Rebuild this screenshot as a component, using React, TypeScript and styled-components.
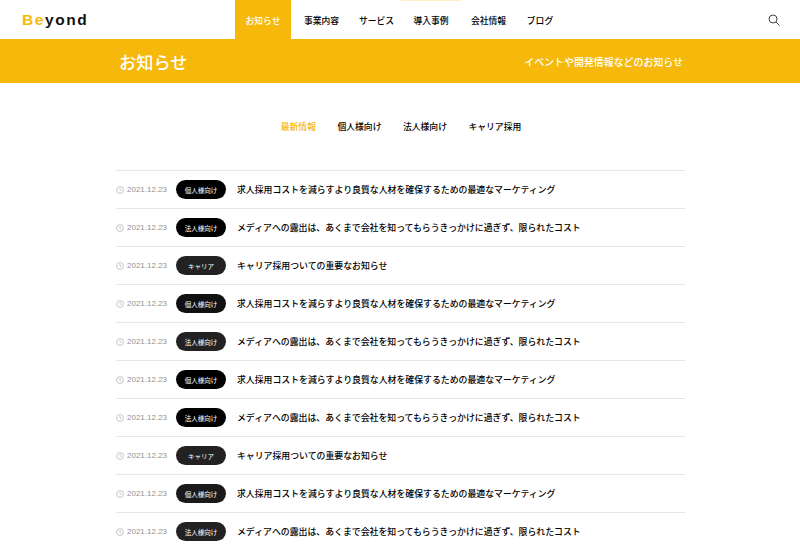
import { createGlobalStyle } from "styled-components";
import styled from "styled-components";

const GlobalStyle = createGlobalStyle`
  html, body {
    margin: 0;
    padding: 0;
    height: 550px;
    overflow: hidden;
    background: #fff;
    font-family: "Noto Sans CJK JP", "Noto Sans", sans-serif;
    color: #000;
  }
`;

const Header = styled.header`
  display: flex;
  align-items: stretch;
  height: 39px;
  padding: 0 20px 0 22px;
`;

const Logo = styled.div`
  width: 213px;
  display: flex;
  align-items: center;
  font-family: "Liberation Sans", sans-serif;
  font-size: 15.5px;
  font-weight: 700;
  letter-spacing: 1.6px;
  color: #111;

  span {
    color: #f5b80b;
  }
`;

const Nav = styled.nav`
  display: flex;
  flex: 1;
`;

const NavItem = styled.a<{ $active?: boolean; $hover?: boolean; $wide: number }>`
  display: flex;
  align-items: center;
  justify-content: center;
  width: ${(props) => props.$wide}px;
  font-size: 8.8px;
  font-weight: 500;
  white-space: nowrap;
  box-sizing: border-box;
  border-top: 1px solid ${(props) => (props.$hover ? "#fdf1c8" : "transparent")};
  background: ${(props) => (props.$active ? "#f5b80b" : "transparent")};
  color: ${(props) => (props.$active ? "#fff" : "#000")};
`;

const SearchButton = styled.div`
  display: flex;
  align-items: center;
  color: #333;
`;

const Hero = styled.div`
  height: 44px;
  background: #f5b80b;
  color: #fff;
  display: flex;
  align-items: center;
  justify-content: space-between;
  padding: 0 117px 0 119px;
`;

const HeroTitle = styled.h1`
  margin: 0;
  font-size: 17.2px;
  font-weight: 500;
`;

const HeroText = styled.p`
  margin: 0;
  font-size: 9.95px;
  font-weight: 500;
`;

const Tabs = styled.div`
  display: flex;
  justify-content: center;
  gap: 21.5px;
  margin-top: 37px;
  padding-left: 2px;
  height: 14px;
  align-items: center;
`;

const Tab = styled.a<{ $active?: boolean }>`
  font-size: 8.8px;
  font-weight: 500;
  line-height: 14px;
  color: ${(props) => (props.$active ? "#f5b80b" : "#000")};
`;

const List = styled.ul`
  list-style: none;
  margin: 36px 115px 0 116px;
  padding: 0;
  border-top: 1px solid #e6e6e6;
`;

const Row = styled.li`
  display: flex;
  align-items: center;
  height: 37px;
  border-bottom: 1px solid #e6e6e6;
`;

const DateCell = styled.div`
  width: 60px;
  display: flex;
  align-items: center;
  gap: 3px;
  font-family: "Liberation Sans", sans-serif;
  font-size: 8px;
  color: #929292;
`;

const Badge = styled.span<{ $color: string }>`
  width: 50px;
  height: 19px;
  border-radius: 10px;
  display: flex;
  align-items: center;
  justify-content: center;
  background: ${(props) => props.$color};
  color: #fff;
  font-size: 6.5px;
  font-weight: 400;
  margin-right: 11px;
`;

const RowTitle = styled.a`
  font-size: 8.88px;
  font-weight: 500;
  color: #000;
  white-space: nowrap;
`;

const Clock = () => (
  <svg width="8" height="8" viewBox="0 0 14 14" fill="none" stroke="#a5a5a5" strokeWidth="1.1">
    <circle cx="7" cy="7" r="6" />
    <path d="M7 3.5V7l2.5 1.5" />
  </svg>
);

const recruit = "求人採用コストを減らすより良質な人材を確保するための最適なマーケティング";
const media = "メディアへの露出は、あくまで会社を知ってもらうきっかけに過ぎず、限られたコスト";
const career = "キャリア採用ついての重要なお知らせ";

const rows = [
  { tag: "個人様向け", color: "#000", title: recruit },
  { tag: "法人様向け", color: "#000", title: media },
  { tag: "キャリア", color: "#222", title: career },
  { tag: "個人様向け", color: "#111", title: recruit },
  { tag: "法人様向け", color: "#222", title: media },
  { tag: "個人様向け", color: "#000", title: recruit },
  { tag: "法人様向け", color: "#000", title: media },
  { tag: "キャリア", color: "#222", title: career },
  { tag: "個人様向け", color: "#1a1a1a", title: recruit },
  { tag: "法人様向け", color: "#222", title: media },
];

export default function App() {
  return (
    <>
      <GlobalStyle />
      <Header>
        <Logo>
          <div>
            <span>Be</span>yond
          </div>
        </Logo>
        <Nav>
          <NavItem $active $wide={56}>お知らせ</NavItem>
          <NavItem $wide={61}>事業内容</NavItem>
          <NavItem $wide={49}>サービス</NavItem>
          <NavItem $hover $wide={60}>導入事例</NavItem>
          <NavItem $wide={55}>会社情報</NavItem>
          <NavItem $wide={48}>ブログ</NavItem>
        </Nav>
        <SearchButton>
          <svg width="12" height="12" viewBox="0 0 24 24" fill="none" stroke="currentColor" strokeWidth="1.8">
            <circle cx="10" cy="10" r="8" />
            <path d="M16 16l7 7" />
          </svg>
        </SearchButton>
      </Header>
      <Hero>
        <HeroTitle>お知らせ</HeroTitle>
        <HeroText>イベントや開発情報などのお知らせ</HeroText>
      </Hero>
      <Tabs>
        <Tab $active>最新情報</Tab>
        <Tab>個人様向け</Tab>
        <Tab>法人様向け</Tab>
        <Tab>キャリア採用</Tab>
      </Tabs>
      <List>
        {rows.map((row, i) => (
          <Row key={i}>
            <DateCell>
              <Clock />
              2021.12.23
            </DateCell>
            <Badge $color={row.color}>{row.tag}</Badge>
            <RowTitle>{row.title}</RowTitle>
          </Row>
        ))}
      </List>
    </>
  );
}
